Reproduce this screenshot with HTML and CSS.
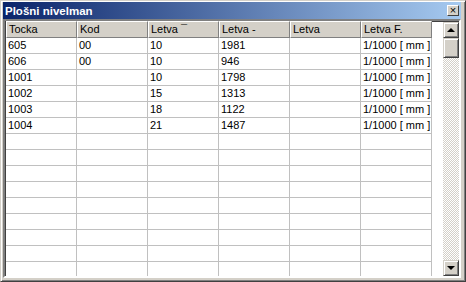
FILE: index.html
```html
<!DOCTYPE html>
<html lang="hr">
<head>
    <meta charset="UTF-8">
    <title>Plošni nivelman</title>
    <link rel="stylesheet" href="styles.css">
</head>
<body>
    <div class="window">
        <div class="titlebar">
            <span class="title">Plošni nivelman</span>
            <span class="close">×</span>
        </div>

        <div class="grid">
            <div class="table-area">
                <table class="data">
                    <thead>
                        <tr>
                            <th>Tocka</th>
                            <th>Kod</th>
                            <th>Letva ¯</th>
                            <th>Letva -</th>
                            <th>Letva</th>
                            <th>Letva F.</th>
                        </tr>
                    </thead>
                    <tbody>
                        <tr><td>605</td><td>00</td><td>10</td><td>1981</td><td></td><td>1/1000 [ mm ]</td></tr>
                        <tr><td>606</td><td>00</td><td>10</td><td>946</td><td></td><td>1/1000 [ mm ]</td></tr>
                        <tr><td>1001</td><td></td><td>10</td><td>1798</td><td></td><td>1/1000 [ mm ]</td></tr>
                        <tr><td>1002</td><td></td><td>15</td><td>1313</td><td></td><td>1/1000 [ mm ]</td></tr>
                        <tr><td>1003</td><td></td><td>18</td><td>1122</td><td></td><td>1/1000 [ mm ]</td></tr>
                        <tr><td>1004</td><td></td><td>21</td><td>1487</td><td></td><td>1/1000 [ mm ]</td></tr>
                        <tr><td></td><td></td><td></td><td></td><td></td><td></td></tr>
                        <tr><td></td><td></td><td></td><td></td><td></td><td></td></tr>
                        <tr><td></td><td></td><td></td><td></td><td></td><td></td></tr>
                        <tr><td></td><td></td><td></td><td></td><td></td><td></td></tr>
                        <tr><td></td><td></td><td></td><td></td><td></td><td></td></tr>
                        <tr><td></td><td></td><td></td><td></td><td></td><td></td></tr>
                        <tr><td></td><td></td><td></td><td></td><td></td><td></td></tr>
                        <tr><td></td><td></td><td></td><td></td><td></td><td></td></tr>
                        <tr><td></td><td></td><td></td><td></td><td></td><td></td></tr>
                    </tbody>
                </table>
            </div>

            <!-- vertikalni scrollbar -->
            <div class="scrollbar">
                <div class="sb-btn"><span class="arrow-up"></span></div>
                <div class="sb-thumb"></div>
                <div class="sb-track"></div>
                <div class="sb-btn"><span class="arrow-down"></span></div>
            </div>
        </div>
    </div>
</body>
</html>
```

FILE: styles.css
```css
* {
    margin: 0;
    padding: 0;
    box-sizing: border-box;
}

body {
    font-family: 'Liberation Sans', Arial, sans-serif;
    font-size: 11px;
    background: #d4d0c8;
}

.window {
    width: 466px;
    height: 282px;
    padding: 1px;
    display: flex;
    flex-direction: column;
    background: #d4d0c8;
    border: 1px solid;
    border-color: #d4d0c8 #404040 #404040 #d4d0c8;
    box-shadow: inset 1px 1px 0 #fff, inset -1px -1px 0 #808080;
}

.titlebar {
    height: 17px;
    margin: 0 3px 0 1px;
    display: flex;
    align-items: center;
    justify-content: space-between;
    padding: 0 2px 0 2px;
    background: linear-gradient(to right, #0a246a 0%, #a6caf0 100%);
}

.title {
    color: #fff;
    font-weight: bold;
    font-size: 11.5px;
}

.close {
    width: 12px;
    height: 11px;
    background: #d4d0c8;
    border: 1px solid;
    border-color: #fff #404040 #404040 #fff;
    font-size: 11px;
    line-height: 8px;
    text-align: center;
    color: #000;
}

.grid {
    flex: 1;
    margin: 0 3px 2px 1px;
    display: flex;
    background: #fff;
    border: 2px solid;
    border-color: #808080 #fff #fff #808080;
    box-shadow: inset 1px 1px 0 #404040;
    overflow: hidden;
}

.table-area {
    flex: 1;
    overflow: hidden;
    padding-left: 1px;
}

.data {
    width: 426px;
    table-layout: fixed;
    border-collapse: separate;
    border-spacing: 0;
}

.data th {
    background: #d4d0c8;
    font-weight: normal;
    text-align: left;
    line-height: 13px;
    height: 17px;
    padding: 1px 2px;
    border-top: 1px solid #fff;
    border-left: 1px solid #fff;
    border-right: 1px solid #808080;
    border-bottom: 1px solid #808080;
    white-space: nowrap;
    overflow: hidden;
    color: #000;
}

.data td {
    line-height: 15px;
    height: 16px;
    padding: 0 2px;
    border-right: 1px solid #c0c0c0;
    border-bottom: 1px solid #c0c0c0;
    white-space: nowrap;
    overflow: hidden;
    color: #000;
}

.scrollbar {
    width: 16px;
    display: flex;
    flex-direction: column;
    padding-top: 1px;
}

.sb-btn,
.sb-thumb {
    background: #d4d0c8;
    border: 1px solid;
    border-color: #d4d0c8 #404040 #404040 #d4d0c8;
    box-shadow: inset 1px 1px 0 #fff, inset -1px -1px 0 #808080;
}

.sb-btn {
    height: 16px;
    display: flex;
    align-items: center;
    justify-content: center;
}

.sb-thumb {
    height: 20px;
}

.sb-track {
    flex: 1;
    background-color: #d4d0c8;
    background-image: conic-gradient(#fff 25%, #d4d0c8 0 50%, #fff 0 75%, #d4d0c8 0);
    background-size: 2px 2px;
}

.arrow-up {
    border-left: 4px solid transparent;
    border-right: 4px solid transparent;
    border-bottom: 4px solid #000;
}

.arrow-down {
    border-left: 4px solid transparent;
    border-right: 4px solid transparent;
    border-top: 4px solid #000;
}
```
